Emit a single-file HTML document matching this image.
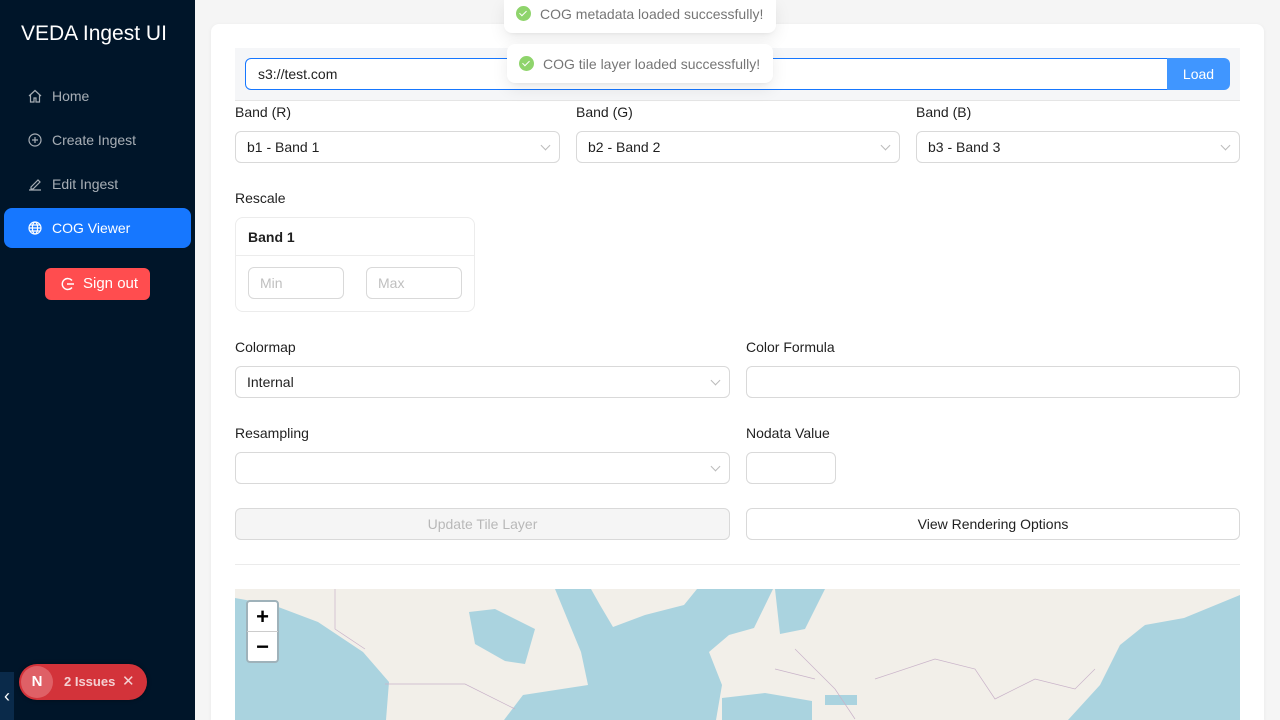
<!DOCTYPE html>
<html style="overflow:hidden;width:1280px;height:720px"><head><meta charset="utf-8"><style>
*{box-sizing:border-box;margin:0;padding:0}
body{width:1280px;height:720px;overflow:hidden;background:#f5f5f5;font-family:"Liberation Sans",sans-serif;font-size:14px;color:rgba(0,0,0,.88);position:relative}
.side{position:absolute;left:0;top:0;width:195px;height:720px;background:#001529}
.logo{position:absolute;left:21px;top:22px;color:#fff;font-size:21px}
.nav{position:absolute;left:4px;width:187px;height:40px;border-radius:8px;color:rgba(255,255,255,.65);padding-left:48px;line-height:40px}
.nav svg{position:absolute;left:24px;top:13px}
.nav.act{background:#1677ff;color:#fff}
.signout{position:absolute;left:45px;top:268px;width:105px;height:32px;background:#ff4d4f;border-radius:6px;color:#fff;font-size:15px;line-height:32px;padding-left:38px}
.card{position:absolute;left:211px;top:24px;width:1053px;height:696px;background:#fff;border-radius:8px 8px 0 0;box-shadow:0 1px 4px rgba(0,0,0,.06);overflow:hidden}
.abs{position:absolute}
.lbl{position:absolute;font-size:14px;color:rgba(0,0,0,.88)}
.sel{position:absolute;height:32px;border:1px solid #d9d9d9;border-radius:6px;background:#fff;padding-left:11px;line-height:30px}
.sel .ar{position:absolute;right:10px;top:10px;width:7px;height:7px;border-right:1px solid #bbb;border-bottom:1px solid #bbb;transform:rotate(45deg)}
.toast{position:absolute;background:#fff;border-radius:8px;box-shadow:0 6px 16px rgba(0,0,0,.08),0 3px 6px -4px rgba(0,0,0,.12);color:rgba(0,0,0,.55);font-size:14px;padding-left:36px;line-height:28px}
.toast i{position:absolute;left:12px;top:7px;width:15px;height:15px;border-radius:50%;background:#8fd46c}
.toast i:after{content:"";position:absolute;left:5px;top:3px;width:3px;height:6px;border-right:1.5px solid #fff;border-bottom:1.5px solid #fff;transform:rotate(45deg)}
</style></head><body>
<div class="side">
<div class="logo">VEDA Ingest UI</div>
<div class="nav" style="top:76px"><svg width="14" height="14" viewBox="0 0 14 14" fill="none" stroke="#a6adb4" stroke-width="1.2"><path d="M1 7L7 1.5 13 7M2.5 5.8V13h3.5V9h2v4h3.5V5.8"/></svg>Home</div>
<div class="nav" style="top:120px"><svg width="14" height="14" viewBox="0 0 14 14" fill="none" stroke="#a6adb4" stroke-width="1.2"><circle cx="7" cy="7" r="6"/><path d="M7 4v6M4 7h6"/></svg>Create Ingest</div>
<div class="nav" style="top:164px"><svg width="14" height="14" viewBox="0 0 14 14" fill="none" stroke="#a6adb4" stroke-width="1.2"><path d="M1 13h12M3 10l7-7 2 2-7 7H3z"/></svg>Edit Ingest</div>
<div class="nav act" style="top:208px"><svg width="14" height="14" viewBox="0 0 14 14" fill="none" stroke="#fff" stroke-width="1.2"><circle cx="7" cy="7" r="6"/><ellipse cx="7" cy="7" rx="2.6" ry="6"/><path d="M1 7h12M2 4h10M2 10h10"/></svg>COG Viewer</div>
<div class="signout"><svg style="position:absolute;left:16px;top:9px" width="14" height="14" viewBox="0 0 14 14" fill="none" stroke="#fff" stroke-width="1.4"><path d="M11 3.5A5.5 5.5 0 1 0 11 10.5M6 7h7"/></svg>Sign out</div>
<div class="abs" style="left:0;top:672px;width:14px;height:48px;background:#0a2a4a;color:#fff;font-size:18px;line-height:48px;text-align:center">‹</div>
<div class="abs" style="left:19px;top:664px;width:128px;height:36px;border-radius:18px;background:#d3333a;box-shadow:0 0 4px rgba(0,0,0,.4)">
<div class="abs" style="left:2px;top:2px;width:32px;height:32px;border-radius:50%;background:#df6066;color:#fff;text-align:center;line-height:32px;font-weight:bold;font-size:15px">N</div>
<div class="abs" style="left:45px;top:10px;color:#f4d0d2;font-weight:bold;font-size:13px">2 Issues</div>
<div class="abs" style="left:103px;top:8px;color:#f4d0d2;font-size:15px">✕</div></div>
</div>

<div class="card">
<div class="abs" style="left:24px;top:24px;width:1005px;height:53px;background:#f5f6f8;border-bottom:1px solid #e5e5e5"></div>
<div class="abs" style="left:34px;top:34px;width:924px;height:32px;border:1px solid #1677ff;border-radius:6px 0 0 6px;background:#fff;padding-left:12px;line-height:30px">s3://test.com</div>
<div class="abs" style="left:956px;top:34px;width:63px;height:32px;background:#4096ff;border-radius:0 6px 6px 0;color:#fff;text-align:center;line-height:32px">Load</div>
<div class="lbl" style="left:24px;top:80px">Band (R)</div>
<div class="lbl" style="left:365px;top:80px">Band (G)</div>
<div class="lbl" style="left:705px;top:80px">Band (B)</div>
<div class="sel" style="left:24px;top:107px;width:325px">b1 - Band 1<span class="ar"></span></div>
<div class="sel" style="left:365px;top:107px;width:324px">b2 - Band 2<span class="ar"></span></div>
<div class="sel" style="left:705px;top:107px;width:324px">b3 - Band 3<span class="ar"></span></div>
<div class="lbl" style="left:24px;top:166px">Rescale</div>
<div class="abs" style="left:24px;top:193px;width:240px;height:95px;border:1px solid #ececec;border-radius:8px">
<div class="abs" style="left:0;top:0;width:238px;height:38px;border-bottom:1px solid #ececec;font-weight:bold;padding:11px 0 0 12px">Band 1</div>
<div class="sel" style="left:12px;top:49px;width:96px;color:#bfbfbf">Min</div>
<div class="sel" style="left:130px;top:49px;width:96px;color:#bfbfbf">Max</div></div>
<div class="lbl" style="left:24px;top:315px">Colormap</div>
<div class="lbl" style="left:535px;top:315px">Color Formula</div>
<div class="sel" style="left:24px;top:342px;width:495px">Internal<span class="ar"></span></div>
<div class="sel" style="left:535px;top:342px;width:494px"></div>
<div class="lbl" style="left:24px;top:401px">Resampling</div>
<div class="lbl" style="left:535px;top:401px">Nodata Value</div>
<div class="sel" style="left:24px;top:428px;width:495px"><span class="ar"></span></div>
<div class="sel" style="left:535px;top:428px;width:90px"></div>
<div class="sel" style="left:24px;top:484px;width:495px;background:#f5f5f5;color:rgba(0,0,0,.25);text-align:center;padding:0">Update Tile Layer</div>
<div class="sel" style="left:535px;top:484px;width:494px;text-align:center;padding:0">View Rendering Options</div>
<div class="abs" style="left:24px;top:540px;width:1005px;height:1px;background:#ebebeb"></div>
<svg class="abs" style="left:24px;top:565px" width="1005" height="131" viewBox="0 0 1005 131">
<rect width="1005" height="131" fill="#f2efe9"/>
<g fill="#aad3df">
<polygon points="0,9 38,16 83,33 128,63 154,93 151,131 0,131"/>
<polygon points="320,0 346,63 353,96 288,106 269,131 481,131 487,96 474,63 494,46 519,39 538,0"/>
<polygon points="234,23 260,20 300,40 290,75 270,72 240,55"/>
<polygon points="487,109 530,104 577,112 577,131 487,131"/>
<polygon points="590,106 622,106 622,116 590,116"/>
<polygon points="885,56 910,36 949,29 1005,6 1005,131 833,131 865,96"/>
<polygon points="540,0 590,0 570,40 545,45"/>
</g>
<polygon fill="#f2efe9" points="356,0 462,0 449,16 410,26 378,38 365,16"/>
<g fill="none" stroke="#c9b3c9" stroke-width=".7"><path d="M100,0V40L130,60M150,95H230L280,120M560,60L580,80 600,100 620,130M640,90L700,70 740,80 760,110 800,90 840,100 860,80M540,80L580,90"/></g>
<g transform="translate(12,12)"><rect width="31" height="61" rx="3" fill="#fff" stroke="#9fb2ba" stroke-width="2"/><line x1="0" y1="30.5" x2="31" y2="30.5" stroke="#ccc"/><text x="15.5" y="23" font-size="22" font-weight="bold" text-anchor="middle" fill="#000" font-family="Liberation Sans">+</text><text x="15.5" y="53" font-size="22" font-weight="bold" text-anchor="middle" fill="#000" font-family="Liberation Sans">−</text></g>
</svg>
</div>
<div class="toast" style="left:504px;top:0;width:272px;height:33px;border-radius:0 0 8px 8px;line-height:28px">COG metadata loaded successfully!<i style="top:6px"></i></div>
<div class="toast" style="left:507px;top:44px;width:266px;height:39px;line-height:40px">COG tile layer loaded successfully!<i style="top:12px;left:12px"></i></div>
</body></html>
